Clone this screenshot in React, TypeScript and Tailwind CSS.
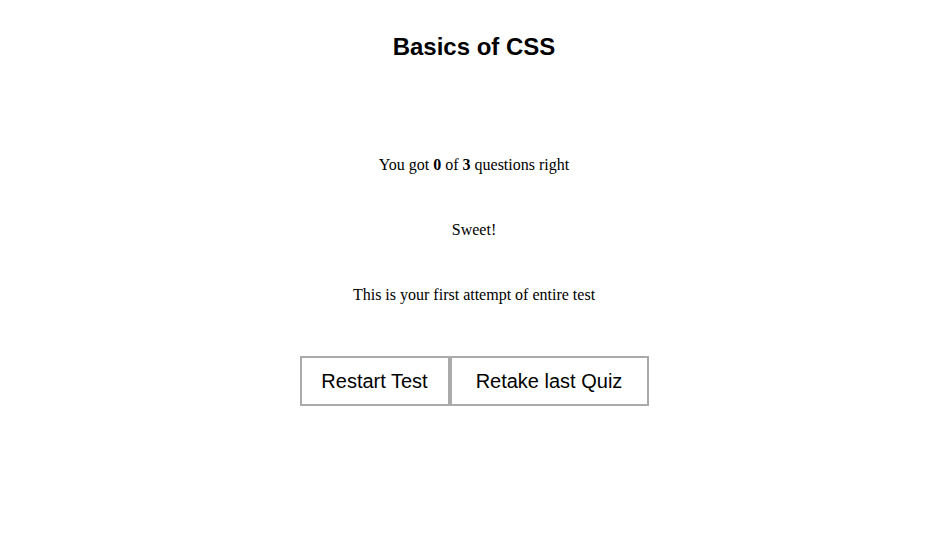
const App = () => {
  const score = 0;
  const total = 3;
  return (
    <div className="min-h-[558px] w-full bg-white pr-[4px] text-black">
      <h1 className="pt-[33px] text-center text-[24px] font-bold leading-[28px] font-['Liberation_Sans',Arial,sans-serif]">
        Basics of CSS
      </h1>
      <div className="mt-[94px] flex flex-col items-center font-['Liberation_Serif','Times_New_Roman',serif] text-[16px] leading-[20px]">
        <p>
          You got <b>{score}</b> of <b>{total}</b> questions right
        </p>
        <p className="mt-[45px]">Sweet!</p>
        <p className="mt-[45px]">This is your first attempt of entire test</p>
      </div>
      <div className="mt-[51px] flex justify-center font-['Liberation_Sans',Arial,sans-serif] text-[20px]">
        <button className="h-[50px] w-[150px] border-2 border-[#aaaaaa] bg-white text-black">
          Restart Test
        </button>
        <button className="h-[50px] w-[199px] border-2 border-[#aaaaaa] bg-white text-black">
          Retake last Quiz
        </button>
      </div>
    </div>
  );
};

export default App;
